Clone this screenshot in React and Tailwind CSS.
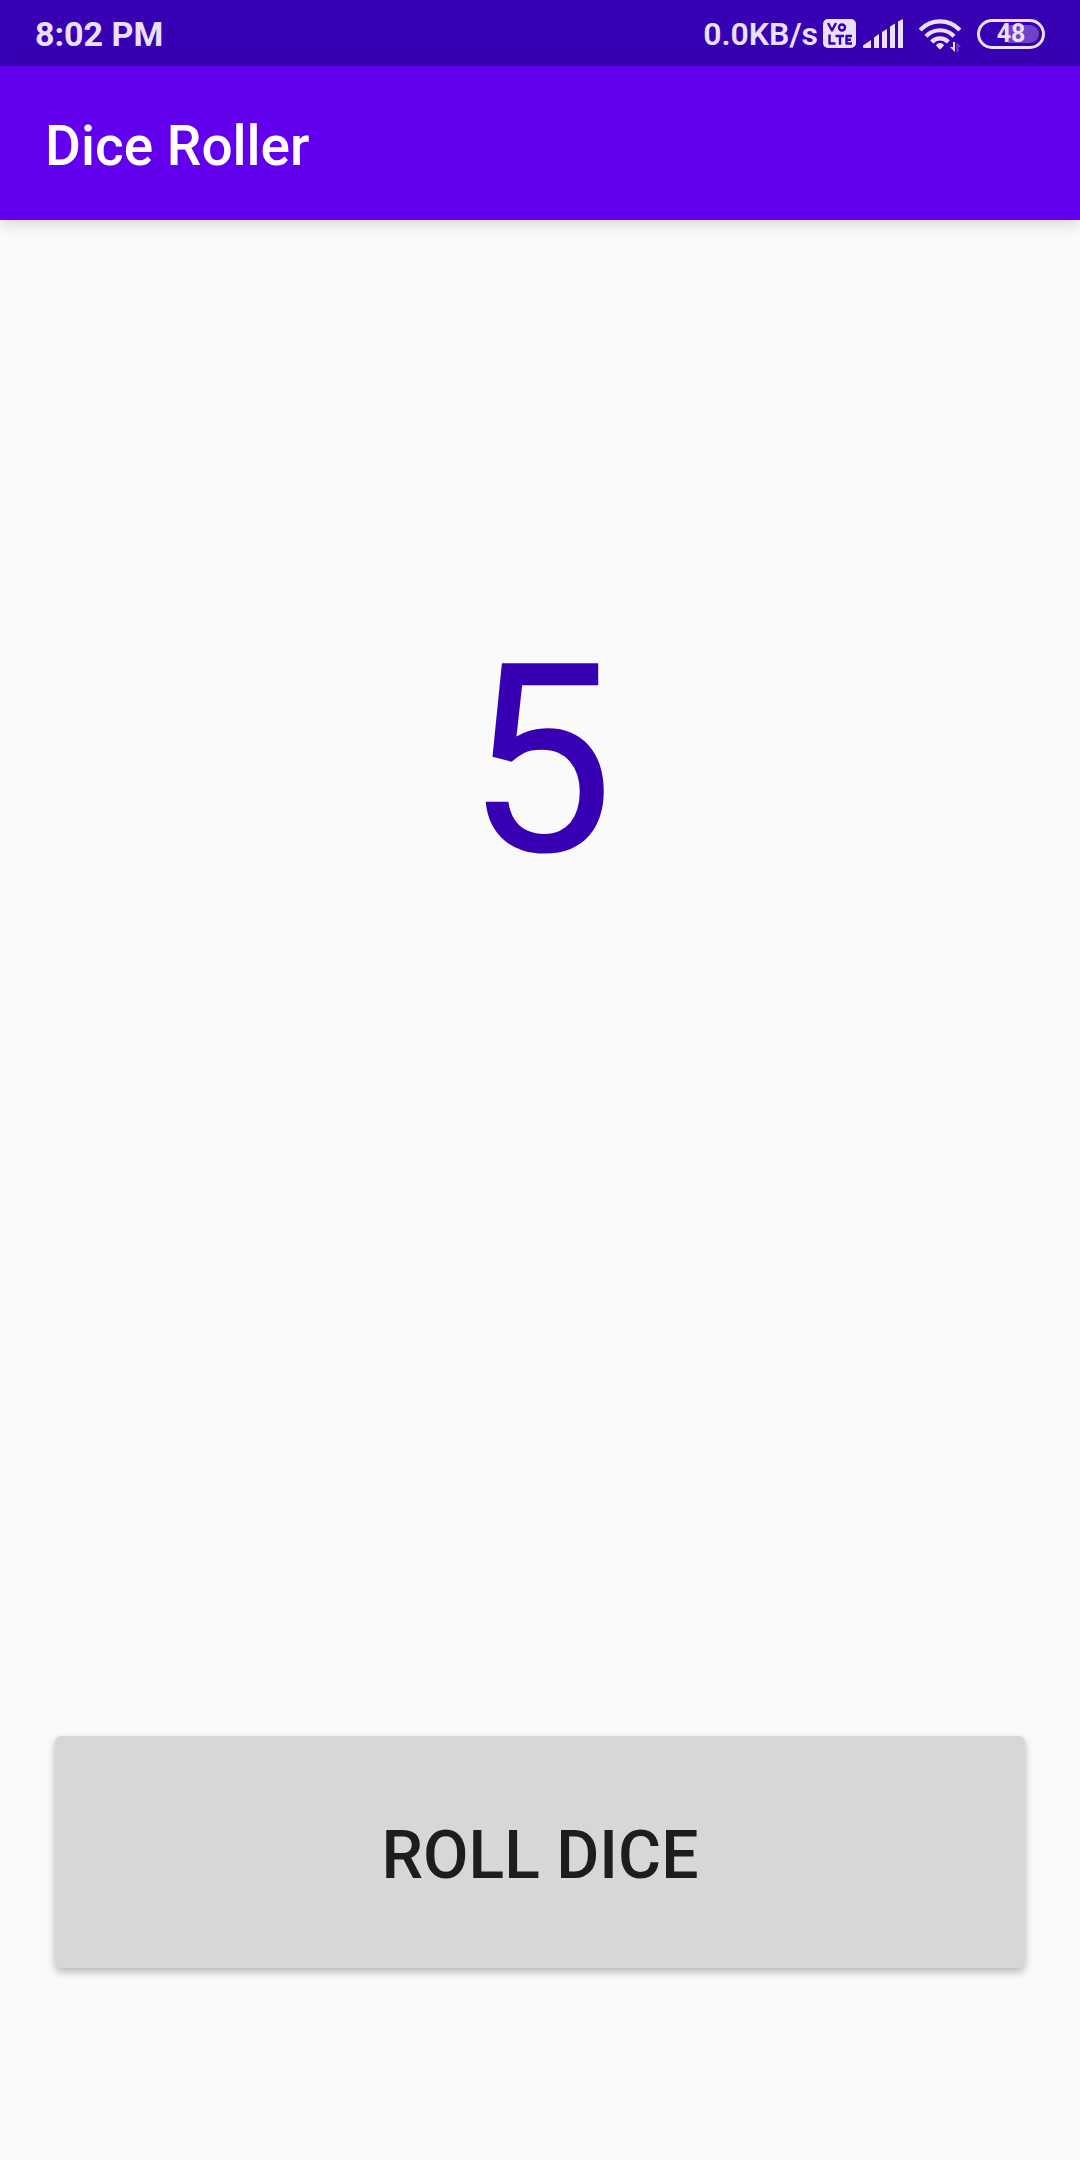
import { useState } from "react";

function VolteBadge() {
  return (
    <svg viewBox="0 0 33 29" className="h-[29px] w-[33px]" role="img" aria-label="VoLTE">
      <rect width="33" height="29" rx="5" fill="#ebe0fb" />
      <g fill="none" stroke="#3700b3" strokeWidth="2.4" strokeLinejoin="round">
        <path d="M5 4 L9 11.500 L13 4" />
        <circle cx="19" cy="8.500" r="3" />
        <path d="M6.500 15.500 V24.500 H12.500 M12.500 17 H21 M17 17 V25.700 M29 17 H23.500 V24.500 H29 M23.500 20.800 H28" />
      </g>
    </svg>
  );
}

function SignalIcon() {
  return (
    <svg viewBox="0 0 40 30" className="h-[30px] w-10" fill="#ebe0fb" aria-hidden="true">
      <path d="M0 26.500 L8 21 V29 H1 Q0 29 0 28 Z M11 18.500 L16 15 V29 H11 Z M19 13 L24 10 V29 H19 Z M27 7.500 L32 4.500 V29 H27 Z M35 2.500 L40 0 V29 H35 Z" />
    </svg>
  );
}

function WifiIcon() {
  return (
    <svg viewBox="0 0 42 34" className="h-[34px] w-[42px]" aria-hidden="true">
      <g fill="none" stroke="#ebe0fb" strokeWidth="4.2">
        <path d="M1.200 11 A27 27 0 0 1 40.800 11" />
        <path d="M7 17.200 A19.500 19.500 0 0 1 35 17.200" />
        <path d="M12.700 23 A11.500 11.500 0 0 1 29.300 23" />
      </g>
      <path d="M17.200 26.800 Q17.500 24 21 24 Q24.500 24 24.800 26.800 L21.700 30 Q21 30.500 20.300 30 Z" fill="#ebe0fb" />
      <path d="M36 23 V33 L31 28 H34 V23 Z" fill="#ebe0fb" />
      <path d="M37.500 33 V23 L42 28 H39.500 V33 Z" fill="#6e43c9" />
    </svg>
  );
}

function StatusBar() {
  return (
    <div className="flex h-[66px] items-center bg-[#3700b3] px-[35px] pt-px font-bold text-[#ebe0fb]">
      <time className="pt-px text-[34px] leading-10">8:02 PM</time>
      <div className="ml-auto flex items-center">
        <span className="mr-[5px] pt-px text-[32px] leading-10 font-semibold">0.0KB/s</span>
        <VolteBadge />
        <div className="ml-[7px]"><SignalIcon /></div>
        <div className="ml-4 pt-1"><WifiIcon /></div>
        <div className="ml-4 flex h-[30px] w-[68px] rounded-full border-3 border-[#ebe0fb] p-[3px]">
          <div className="flex flex-1 items-center justify-center rounded-full bg-linear-to-r from-transparent from-45% to-[#6e43c9] to-45% text-[25px] leading-none">
            48
          </div>
        </div>
      </div>
    </div>
  );
}

export default function App() {
  const [value, setValue] = useState(5);
  const roll = () => setValue(Math.floor(Math.random() * 6) + 1);

  return (
    <div className="flex min-h-screen flex-col bg-[#fafafa] font-['Roboto',sans-serif]">
      <StatusBar />
      <header className="flex h-[154px] items-center bg-[#6200ee] px-[45px] shadow-[0_4px_14px_rgba(0,0,0,0.14)]">
        <h1 className="pt-1.5 text-[55px] leading-16 font-medium text-white">Dice Roller</h1>
      </header>
      <main className="flex flex-1 flex-col px-[55px] pb-48">
        <output className="mt-[386px] block text-center text-[264px] leading-[310px] text-[#3700b3]">{value}</output>
        <button
          type="button"
          onClick={roll}
          className="mt-auto h-[232px] rounded-md bg-[#d6d8d7] pt-1.5 text-[66px] font-medium text-[#1d1d1d] shadow-[0_4px_8px_rgba(0,0,0,0.28)]"
        >
          ROLL DICE
        </button>
      </main>
    </div>
  );
}
